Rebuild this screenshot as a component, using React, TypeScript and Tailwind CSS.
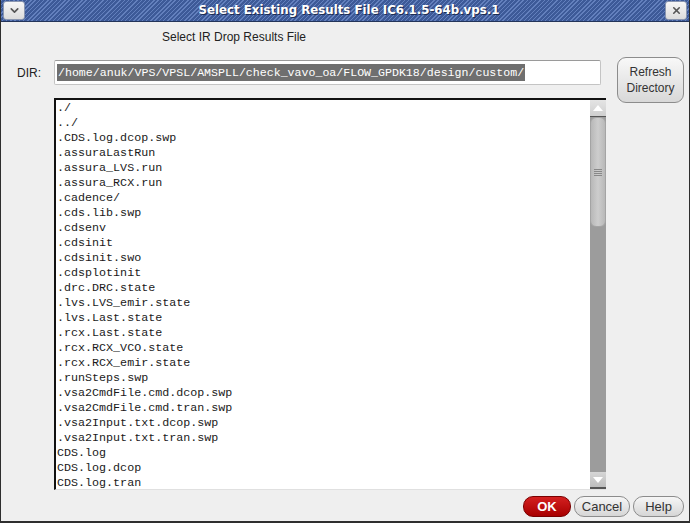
import { ChevronDown, X } from "lucide-react";

const files = [
  "./",
  "../",
  ".CDS.log.dcop.swp",
  ".assuraLastRun",
  ".assura_LVS.run",
  ".assura_RCX.run",
  ".cadence/",
  ".cds.lib.swp",
  ".cdsenv",
  ".cdsinit",
  ".cdsinit.swo",
  ".cdsplotinit",
  ".drc.DRC.state",
  ".lvs.LVS_emir.state",
  ".lvs.Last.state",
  ".rcx.Last.state",
  ".rcx.RCX_VCO.state",
  ".rcx.RCX_emir.state",
  ".runSteps.swp",
  ".vsa2CmdFile.cmd.dcop.swp",
  ".vsa2CmdFile.cmd.tran.swp",
  ".vsa2Input.txt.dcop.swp",
  ".vsa2Input.txt.tran.swp",
  "CDS.log",
  "CDS.log.dcop",
  "CDS.log.tran",
];

function TitleButton({ children }: { children: React.ReactNode }) {
  return (
    <div className="w-[22px] h-[19px] rounded-[3px] border border-[#8a96b0] bg-[linear-gradient(#f6f6f6,#dcdcdc)] flex items-center justify-center text-[#555]">
      {children}
    </div>
  );
}

function Scrollbar() {
  return (
    <div className="w-[16px] h-full flex flex-col bg-[#9c9c9c]">
      <div className="h-[17px] bg-[linear-gradient(#e4e4e4,#cfcfcf)] border-b border-[#555] flex items-center justify-center">
        <div className="w-0 h-0 border-l-[5px] border-r-[5px] border-b-[6px] border-l-transparent border-r-transparent border-b-white" />
      </div>
      <div className="h-[110px] rounded-[6px] bg-[linear-gradient(90deg,#b8b8b8,#cdcdcd,#b8b8b8)] border border-[#a4a4a4] flex flex-col items-center justify-center gap-[1px]">
        <div className="w-[8px] h-[1px] bg-[#888]" />
        <div className="w-[8px] h-[1px] bg-[#888]" />
        <div className="w-[8px] h-[1px] bg-[#888]" />
        <div className="w-[8px] h-[1px] bg-[#888]" />
      </div>
      <div className="flex-1" />
      <div className="h-[17px] bg-[linear-gradient(#d6d6d6,#bdbdbd)] border-b-2 border-[#555] flex items-center justify-center">
        <div className="w-0 h-0 border-l-[5px] border-r-[5px] border-t-[6px] border-l-transparent border-r-transparent border-t-white" />
      </div>
    </div>
  );
}

export default function App() {
  return (
    <div className="w-[690px] h-[523px] flex flex-col bg-[#efefef] border-l border-r border-b-2 border-[#2e2e2e] font-['Liberation_Sans',sans-serif] text-[12px] text-[#222] overflow-hidden">
      <div className="h-[22px] shrink-0 flex items-center justify-between px-[2px] border-b border-[#23345a] bg-[repeating-linear-gradient(135deg,#6380bd_0px,#6380bd_1px,#3d5a98_1px,#3d5a98_3px)]">
        <TitleButton>
          <ChevronDown size={13} strokeWidth={3} />
        </TitleButton>
        <div className="font-['DejaVu_Sans',sans-serif] font-bold text-[11.8px] text-white [text-shadow:1px_1px_0_#1d2c52] ml-[8px]">
          Select Existing Results File IC6.1.5-64b.vps.1
        </div>
        <TitleButton>
          <X size={11} strokeWidth={3.5} />
        </TitleButton>
      </div>

      <div className="pl-[161px] pt-[8px] h-[35px] leading-[15px]">Select IR Drop Results File</div>

      <div className="flex pl-[16px]">
        <div className="flex flex-col w-[589px]">
          <div className="flex items-center h-[25px] mt-[3px]">
            <span className="w-[37px]">DIR:</span>
            <div className="w-[547px] h-[25px] bg-white border border-[#c4c4c4] border-t-[#9a9a9a] rounded-[2px] flex items-center pl-[2px]">
              <span className="bg-[#6f6f6f] text-white font-['Liberation_Mono',monospace] text-[11.6px] leading-[17px] px-[1px]">
                /home/anuk/VPS/VPSL/AMSPLL/check_vavo_oa/FLOW_GPDK18/design/custom/
              </span>
            </div>
          </div>
          <div className="ml-[37px] mt-[13px] w-[552px] h-[392px] bg-white border-t-2 border-l-2 border-[#111] border-b border-b-[#e0e0e0] flex">
            <div className="flex-1 pl-[1px] pt-[1px] font-['Liberation_Mono',monospace] text-[11.7px] leading-[15px] text-[#1a1a1a] overflow-hidden">
              {files.map((f) => (
                <div key={f}>{f}</div>
              ))}
            </div>
            <Scrollbar />
          </div>
        </div>
        <button className="ml-[11px] w-[67px] h-[46px] rounded-[9px] border border-[#8c8c8c] bg-[linear-gradient(#f8f8f8,#d8d8d8)] text-[12px] leading-[16px] text-[#333]">
          Refresh
          <br />
          Directory
        </button>
      </div>

      <div className="flex justify-end gap-[3px] pr-[5px] mt-[6px]">
        <button className="w-[48px] h-[21px] rounded-[10px] bg-[linear-gradient(#d42020,#a80000)] border border-[#7a0000] text-white font-bold text-[13px] leading-[18px]">
          OK
        </button>
        <button className="w-[56px] h-[21px] rounded-[10px] bg-[linear-gradient(#f6f6f6,#d6d6d6)] border border-[#8c8c8c] text-[13px] leading-[18px] text-[#333]">
          Cancel
        </button>
        <button className="w-[51px] h-[21px] rounded-[10px] bg-[linear-gradient(#f6f6f6,#d6d6d6)] border border-[#8c8c8c] text-[13px] leading-[18px] text-[#333]">
          Help
        </button>
      </div>
    </div>
  );
}
